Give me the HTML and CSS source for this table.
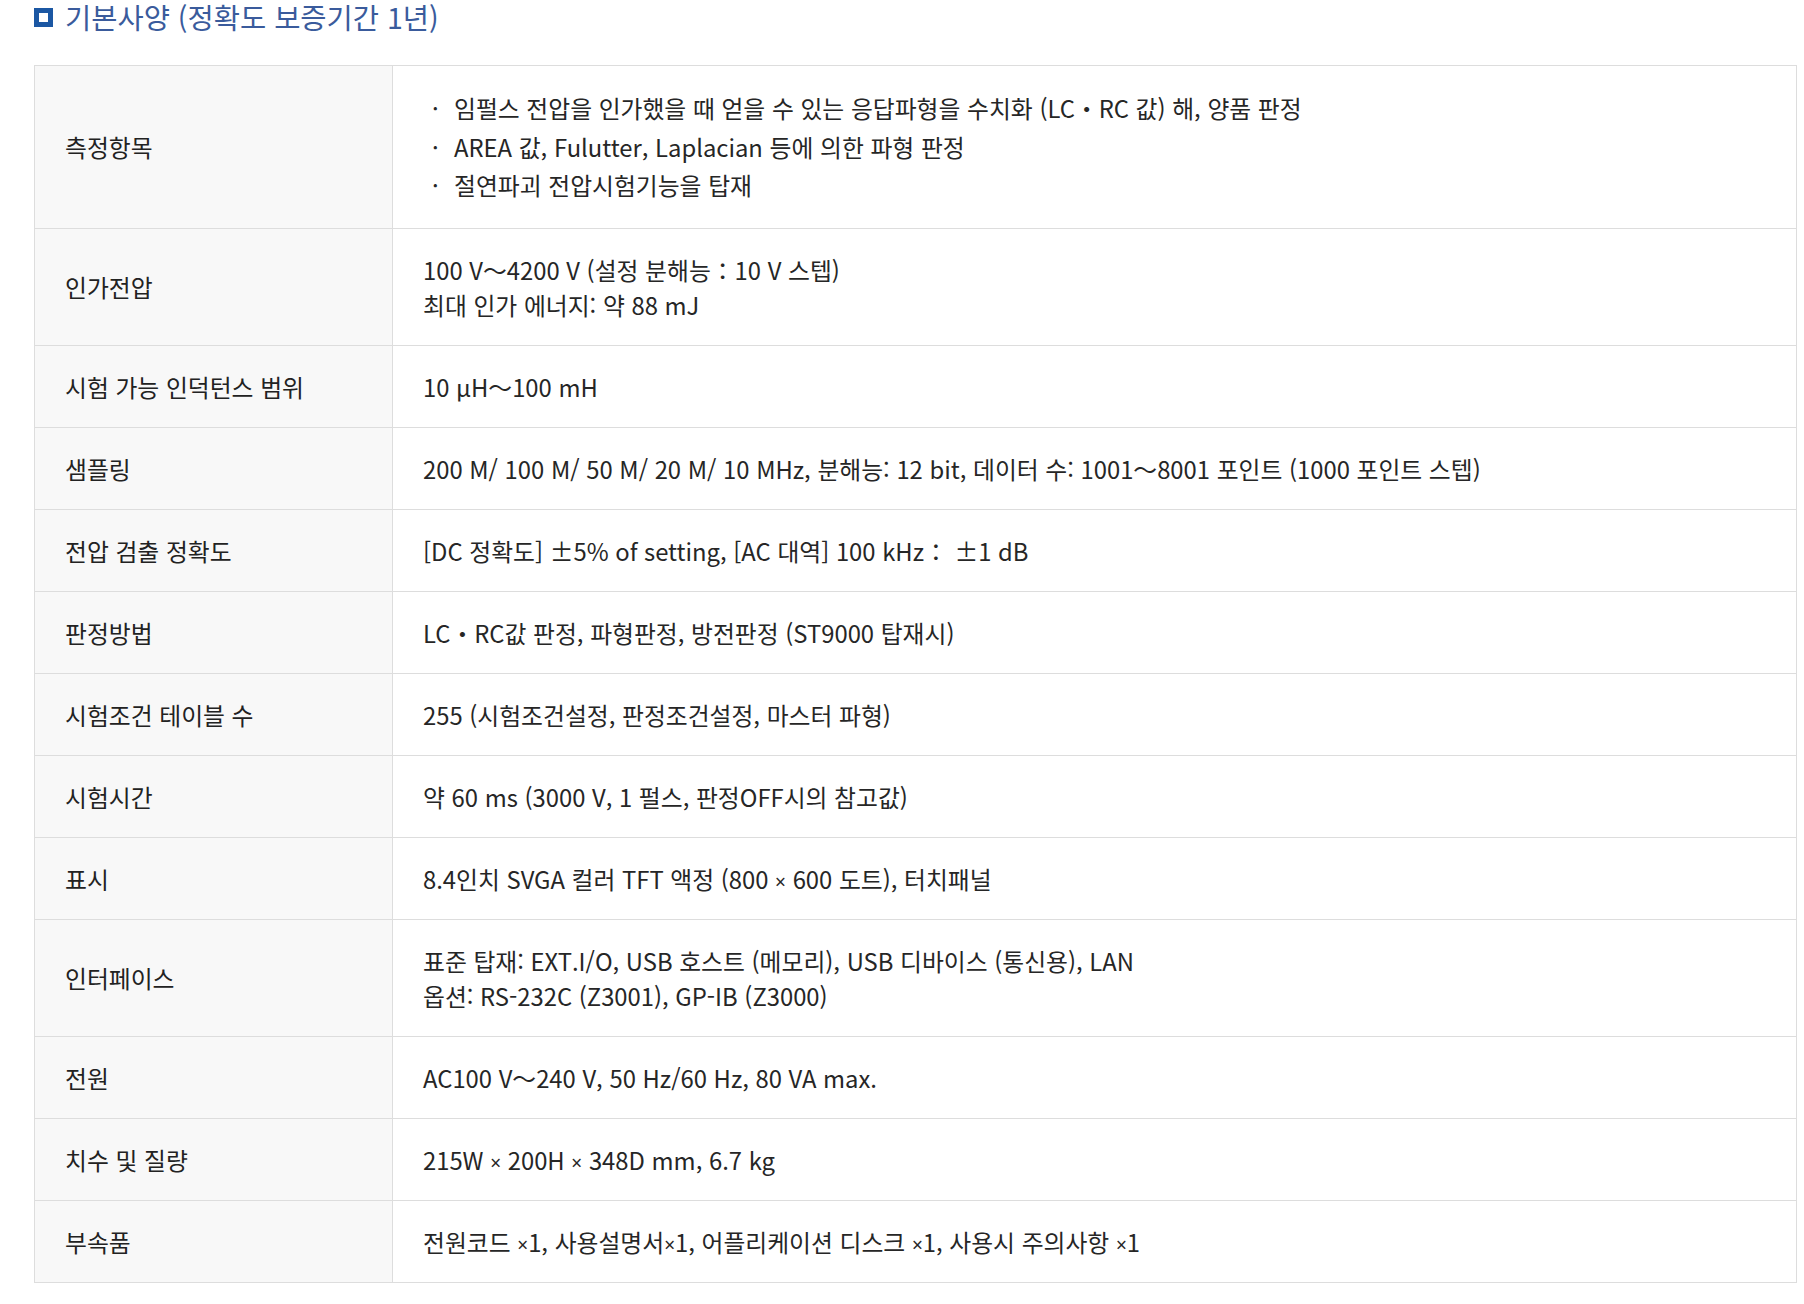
FILE: index.html
```html
<!DOCTYPE html>
<html lang="ko">
<head>
    <meta charset="UTF-8">
    <meta name="viewport" content="width=device-width, initial-scale=1.0">
    <title>기본사양</title>
    <link rel="stylesheet" href="styles.css">
</head>
<body>

    <div class="spec">
        <!-- Section title -->
        <h3 class="spec-title"><span class="title-box"></span>기본사양 (정확도 보증기간 1년)</h3>

        <!-- Spec table -->
        <table class="spec-table">
            <tr>
                <th>측정항목</th>
                <td>
                    <ul class="dot-list">
                        <li>임펄스 전압을 인가했을 때 얻을 수 있는 응답파형을 수치화 (LC・RC 값) 해, 양품 판정</li>
                        <li>AREA 값, Fulutter, Laplacian 등에 의한 파형 판정</li>
                        <li>절연파괴 전압시험기능을 탑재</li>
                    </ul>
                </td>
            </tr>
            <tr>
                <th>인가전압</th>
                <td>100 V～4200 V (설정 분해능：10 V 스텝)<br>최대 인가 에너지: 약 88 mJ</td>
            </tr>
            <tr>
                <th>시험 가능 인덕턴스 범위</th>
                <td>10 μH～100 mH</td>
            </tr>
            <tr>
                <th>샘플링</th>
                <td>200 M/ 100 M/ 50 M/ 20 M/ 10 MHz, 분해능: 12 bit, 데이터 수: 1001～8001 포인트 (1000 포인트 스텝)</td>
            </tr>
            <tr>
                <th>전압 검출 정확도</th>
                <td>[DC 정확도] ±5% of setting, [AC 대역] 100 kHz： ±1 dB</td>
            </tr>
            <tr>
                <th>판정방법</th>
                <td>LC・RC값 판정, 파형판정, 방전판정 (ST9000 탑재시)</td>
            </tr>
            <tr>
                <th>시험조건 테이블 수</th>
                <td>255 (시험조건설정, 판정조건설정, 마스터 파형)</td>
            </tr>
            <tr>
                <th>시험시간</th>
                <td>약 60 ms (3000 V, 1 펄스, 판정OFF시의 참고값)</td>
            </tr>
            <tr>
                <th>표시</th>
                <td>8.4인치 SVGA 컬러 TFT 액정 (800 <span class="times">×</span> 600 도트), 터치패널</td>
            </tr>
            <tr>
                <th>인터페이스</th>
                <td>표준 탑재: EXT.I/O, USB 호스트 (메모리), USB 디바이스 (통신용), LAN<br>옵션: RS-232C (Z3001), GP-IB (Z3000)</td>
            </tr>
            <tr>
                <th>전원</th>
                <td>AC100 V～240 V, 50 Hz/60 Hz, 80 VA max.</td>
            </tr>
            <tr>
                <th>치수 및 질량</th>
                <td>215W <span class="times">×</span> 200H <span class="times">×</span> 348D mm, 6.7 kg</td>
            </tr>
            <tr>
                <th>부속품</th>
                <td>전원코드 <span class="times">×</span>1, 사용설명서<span class="times">×</span>1, 어플리케이션 디스크 <span class="times">×</span>1, 사용시 주의사항 <span class="times">×</span>1</td>
            </tr>
        </table>
    </div>

</body>
</html>
```

FILE: styles.css
```css
* {
    margin: 0;
    padding: 0;
    box-sizing: border-box;
}

body {
    font-family: "Noto Sans CJK KR", "Noto Sans", sans-serif;
    background-color: #fff;
    color: #222;
}

.spec {
    padding: 0 7px 0 34px;
}

.spec-title {
    display: flex;
    align-items: center;
    font-size: 28.5px;
    font-weight: 400;
    line-height: 34px;
    color: #3a5b9c;
    margin-bottom: 31px;
}

.title-box {
    width: 19px;
    height: 19px;
    border: 5px solid #1b57a3;
    background-color: #fff;
    margin-right: 12px;
}

.spec-table {
    width: 100%;
    border-collapse: collapse;
    border: 1px solid #ddd;
    font-size: 23.8px;
}

.spec-table th,
.spec-table td {
    border: 1px solid #ddd;
    padding: 23px 30px;
    line-height: 35px;
    vertical-align: middle;
    text-align: left;
    font-weight: 400;
}

.spec-table th {
    width: 358px;
    background-color: #f8f8f8;
    color: #222;
}

.spec-table td {
    color: #262626;
}

.times {
    font-family: "Noto Sans", sans-serif;
    font-size: 0.8em;
    line-height: 0;
}

.dot-list {
    list-style: none;
}

.dot-list li {
    line-height: 38.5px;
    padding-left: 9px;
}

.dot-list li::before {
    content: "·";
    display: inline-block;
    width: 22px;
}
```
